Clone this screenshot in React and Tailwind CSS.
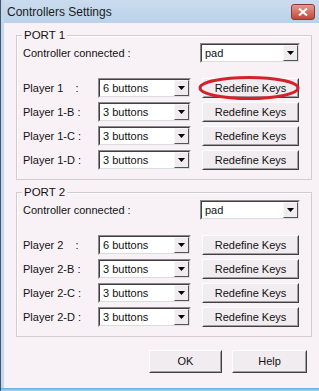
import React from 'react';

const font = { fontFamily: '"Liberation Sans", Arial, sans-serif' };

// sunken combo box with a raised drop-down button
const Combo = ({ value, className = '' }) => (
  <div className={`flex h-[20px] border border-t-[#8a8a8a] border-l-[#8a8a8a] border-b-[#f4f4f4] border-r-[#f4f4f4] ${className}`}>
    <div className="flex flex-1 border border-t-[#404040] border-l-[#404040] border-b-[#dcdcdc] border-r-[#dcdcdc] bg-white">
      <span className="flex-1 pl-[3px] text-[11px] leading-[16px] text-[#111]">{value}</span>
      <div className="flex w-[15px] items-center justify-center border border-t-[#f8f8f8] border-l-[#f8f8f8] border-b-[#555] border-r-[#555] bg-[#efebee]">
        <svg width="7" height="4" viewBox="0 0 7 4"><path d="M0 0h7L3.5 4z" fill="#000" /></svg>
      </div>
    </div>
  </div>
);

const Button = ({ children, className = '' }) => (
  <div className={`flex h-[20px] border border-t-[#fdfdfd] border-l-[#fdfdfd] border-b-[#404040] border-r-[#404040] bg-[#f1ecf0] ${className}`}>
    <div className="flex flex-1 items-center justify-center border border-transparent border-b-[#a0a0a0] border-r-[#a0a0a0] text-[11px] text-[#111]">
      {children}
    </div>
  </div>
);

const PlayerRow = ({ label, value }) => (
  <div className="flex h-[20px] items-center">
    <span className="w-[81px] pl-[6px] text-[11px] text-[#111] whitespace-pre">{label}</span>
    <Combo value={value} className="w-[93px]" />
    <Button className="ml-[11px] w-[97px]">Redefine Keys</Button>
  </div>
);

const Port = ({ name, rows, className = '' }) => (
  <div className={`relative ml-[15px] w-[296px] border border-[#d2ccd1] shadow-[inset_1px_1px_0_#fff] ${className}`}>
    <span className="absolute -top-[8px] left-[5px] bg-[#f8f2f7] px-[2px] text-[11.5px] leading-[14px] text-[#111]">{name}</span>
    <div className="flex items-center pt-[7px]">
      <span className="flex-1 pl-[6px] text-[11px] text-[#111]">Controller connected :</span>
      <Combo value="pad" className="mr-[11px] w-[100px]" />
    </div>
    <div className="mt-[15px] flex flex-col gap-[4px] pb-[9px]">
      {rows.map(([l, v]) => <PlayerRow key={l} label={l} value={v} />)}
    </div>
  </div>
);

export default function App() {
  return (
    <div style={font} className="relative flex h-[391px] w-[319px] flex-col overflow-hidden border-l border-l-[#46556a] bg-[#f8f2f7]">
      <div className="absolute inset-y-0 left-0 w-[3px] bg-[#c3d6eb]" />
      <div className="flex h-[23px] items-center justify-between bg-gradient-to-b from-[#cadcee] to-[#bad1ea] pl-[6px] pr-[4px]">
        <span className="text-[12px] text-[#1b1b1b]">Controllers Settings</span>
        <div className="flex h-[16px] w-[24px] items-center justify-center rounded-[3px] border border-[#8a3a33] bg-gradient-to-b from-[#e49a8c] to-[#c2463a]">
          <svg width="10" height="8" viewBox="0 0 10 8"><path d="M1 0.5l8 7M9 0.5l-8 7" stroke="#fff" strokeWidth="2" /></svg>
        </div>
      </div>
      <Port className="mt-[12px]" name="PORT 1" rows={[['Player 1    :', '6 buttons'], ['Player 1-B :', '3 buttons'], ['Player 1-C :', '3 buttons'], ['Player 1-D :', '3 buttons']]} />
      <Port className="mt-[12px]" name="PORT 2" rows={[['Player 2    :', '6 buttons'], ['Player 2-B :', '3 buttons'], ['Player 2-C :', '3 buttons'], ['Player 2-D :', '3 buttons']]} />
      <div className="mt-[13px] flex justify-end gap-[10px] pr-[12px]">
        <Button className="h-[23px] w-[73px]">OK</Button>
        <Button className="h-[23px] w-[75px]">Help</Button>
      </div>
      <div className="absolute bottom-0 left-0 right-0 h-[3px] bg-gradient-to-b from-[#5eb0d9] to-[#a8d6ee]" />
      <svg className="pointer-events-none absolute left-0 top-0" width="319" height="391">
        <ellipse cx="248" cy="88" rx="49" ry="10.5" fill="none" stroke="#d4222c" strokeWidth="3" />
      </svg>
    </div>
  );
}
